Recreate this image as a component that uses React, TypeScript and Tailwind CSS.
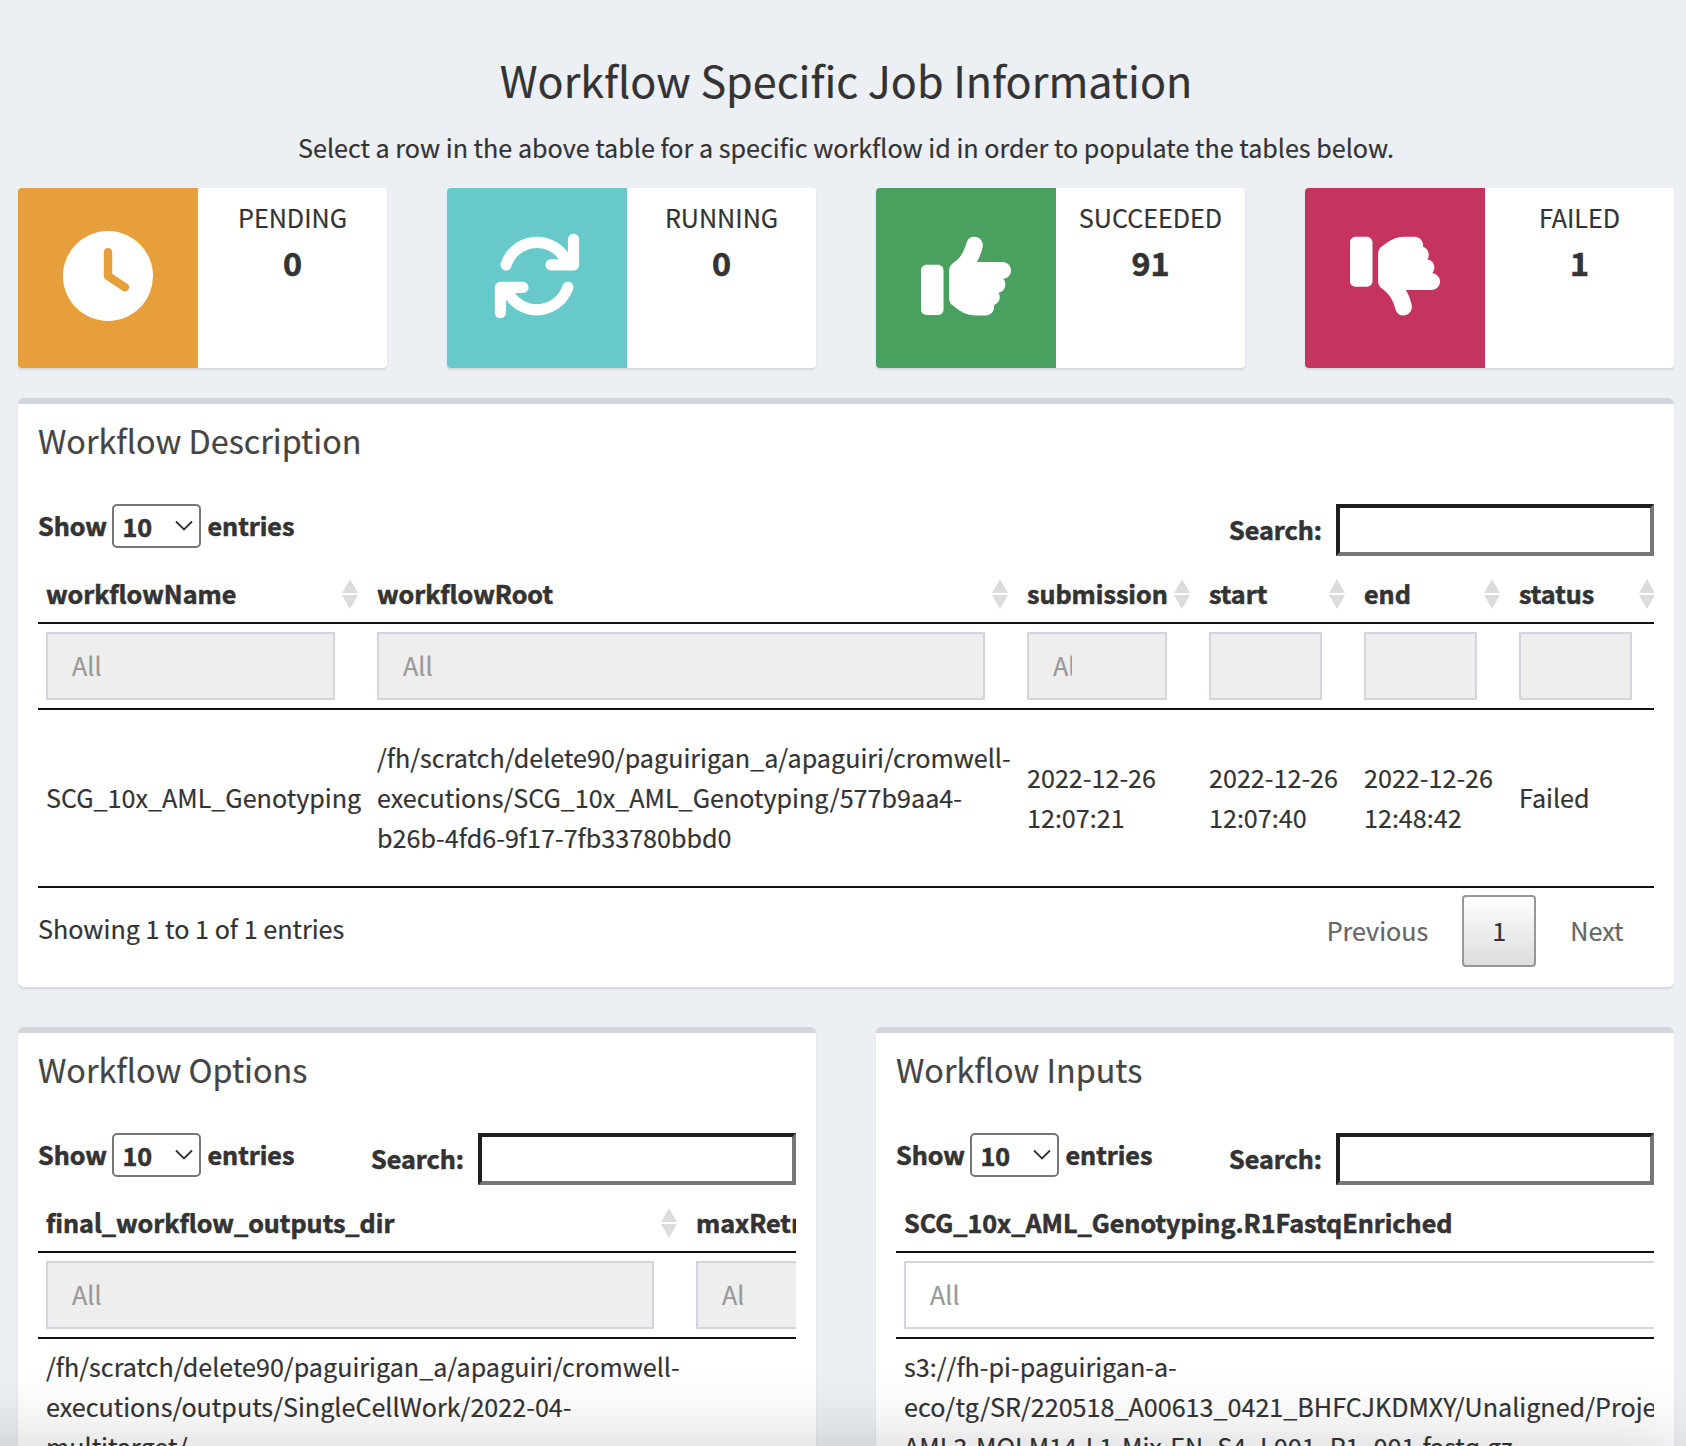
import React from "react";

type Status = { label: string; value: string; color: string; path: string };

const clockPath =
  "M256 0a256 256 0 1 1 0 512A256 256 0 1 1 256 0zM232 120V256c0 8 4 15.5 10.7 20l96 64c11 7.4 25.9 4.4 33.3-6.7s4.4-25.9-6.7-33.3L280 243.2V120c0-13.3-10.7-24-24-24s-24 10.7-24 24z";
const rotatePath =
  "M464 16c-17.67 0-32 14.31-32 32v74.09C392.1 66.52 327.4 32 256 32C161.5 32 78.59 92.64 49.58 182.8c-5.438 16.81 3.797 34.88 20.61 40.28c16.89 5.5 34.88-3.812 40.3-20.59C130.9 138.5 189.4 96 256 96c50.5 0 96.26 24.55 124.4 64H336c-17.67 0-32 14.31-32 32s14.33 32 32 32h128c17.67 0 32-14.31 32-32V48C496 30.31 481.7 16 464 16zM441.8 289.6c-16.92-5.438-34.88 3.812-40.3 20.59C381.1 373.5 322.6 416 256 416c-50.5 0-96.25-24.55-124.4-64H176c17.67 0 32-14.31 32-32s-14.33-32-32-32h-128c-17.67 0-32 14.31-32 32v144c0 17.69 14.33 32 32 32s32-14.31 32-32v-74.09C119.9 445.5 184.6 480 255.1 480c94.45 0 177.4-60.64 206.4-150.8C467.9 313.1 458.6 295 441.8 289.6z";
const thumbsUpPath =
  "M128 447.1V223.1c0-17.67-14.33-31.1-32-31.1H32c-17.67 0-32 14.33-32 31.1v223.1c0 17.67 14.33 31.1 32 31.1h64C113.7 479.1 128 465.6 128 447.1zM512 224.1c0-26.5-21.48-47.98-48-47.98h-146.5c22.77-37.91 34.52-80.88 34.52-96.02C352 56.52 333.5 32 302.5 32c-63.13 0-26.36 76.15-108.2 141.6L178 186.6C166.2 196.1 160.2 210 160.1 224L160 384c0 15.1 7.113 29.33 19.2 38.39l34.14 25.59C241 468.8 274.7 480 309.3 480H368c26.52 0 48-21.47 48-47.98c0-3.635-.4805-7.143-1.246-10.55C434 415.2 448 397.4 448 376c0-9.148-2.697-17.61-7.139-24.88C463.1 347 480 327.5 480 304.1c0-12.5-4.893-23.78-12.72-32.32C492.2 270.1 512 249.5 512 224.1z";
const thumbsDownPath =
  "M96 32.04H32c-17.67 0-32 14.32-32 31.1v223.1c0 17.67 14.33 31.1 32 31.1h64c17.67 0 32-14.33 32-31.1V64.03C128 46.36 113.7 32.04 96 32.04zM467.3 240.2C475.1 231.7 480 220.4 480 207.9c0-23.47-16.87-42.92-39.14-47.09C445.3 153.6 448 145.1 448 135.1c0-21.32-14-39.18-33.25-45.43C415.5 87.12 416 83.61 416 79.98C416 53.47 394.5 32 368 32h-58.69c-34.61 0-68.28 11.22-95.97 31.98L179.2 89.57C167.1 98.63 160 112.9 160 127.1l.1074 160c.0703 13.99 6.123 27.94 17.91 37.36l16.3 13.03C276.2 403.9 239.4 480 302.5 480c30.96 0 49.47-24.52 49.47-48.11c0-15.15-11.76-58.12-34.52-96.02H464c26.52 0 48-21.47 48-47.98C512 262.5 492.2 241.9 467.3 240.2z";

const statuses: Status[] = [
  { label: "PENDING", value: "0", color: "bg-[#e69f3a]", path: clockPath },
  { label: "RUNNING", value: "0", color: "bg-[#67c9ca]", path: rotatePath },
  { label: "SUCCEEDED", value: "91", color: "bg-[#4aa15f]", path: thumbsUpPath },
  { label: "FAILED", value: "1", color: "bg-[#c5345f]", path: thumbsDownPath },
];

function StatusBox({ label, value, color, path }: Status) {
  return (
    <div className="flex h-[180px] overflow-hidden rounded-[4px] bg-white shadow-[0_2px_2px_rgba(0,0,0,0.1)]">
      <div className={`flex w-[180px] shrink-0 items-center justify-center pb-1 text-white ${color}`}>
        <svg width="90" height="90" viewBox="0 0 512 512" fill="currentColor">
          <path d={path} />
        </svg>
      </div>
      <div className="flex flex-1 flex-col items-center pt-[9px]">
        <div className="h-10 leading-10">{label}</div>
        <div className="h-[50px] text-[32.3px] leading-[50px] font-bold [-webkit-text-stroke:0.6px]">{value}</div>
      </div>
    </div>
  );
}

function Panel({ title, className = "", children }: { title: string; className?: string; children: React.ReactNode }) {
  return (
    <section className={`rounded-[6px] border-t-[6px] border-[#d2d6dc] bg-white px-5 shadow-[0_2px_2px_rgba(0,0,0,0.1)] ${className}`}>
      <h3 className="pt-[16px] text-[32.3px] leading-[40px] text-[#444]">{title}</h3>
      {children}
    </section>
  );
}

function Controls() {
  return (
    <div className="mt-[44px] flex h-[52px] items-start justify-between font-bold [-webkit-text-stroke:0.6px]">
      <label className="flex h-11 items-center">
        <span className="pb-[2px]">Show</span>
        <span className="relative mr-[6.5px] ml-[5.5px] block">
          <select className="block h-11 w-[88.5px] appearance-none rounded-[5px] border-2 border-[#767676] bg-white pb-[4px] pl-[8px] font-bold outline-none">
            <option>10</option>
          </select>
          <svg className="pointer-events-none absolute top-[16px] right-[7.5px]" width="18" height="12" viewBox="0 0 18 12" fill="none" stroke="#333" strokeWidth="1.8">
            <path d="M1 1.5 9 9.5 17 1.5" />
          </svg>
        </span>
        <span className="pb-[2px]">entries</span>
      </label>
      <label className="flex items-center">
        <span className="mr-[14px] pb-[2px]">Search:</span>
        <input className="h-[52px] w-[318px] border-4 border-t-[#1f1f1f] border-r-[#767676] border-b-[#767676] border-l-[#1f1f1f] bg-white outline-none" />
      </label>
    </div>
  );
}

function SortIcon() {
  return (
    <svg className="mt-[2px] mr-[10px] shrink-0" width="18" height="32" viewBox="0 0 18 32" fill="#dcdcdc">
      <path d="M9 1 17 15H1ZM9 31 17 17H1Z" />
    </svg>
  );
}

type Column = { name: string; sortable?: boolean; filter: string; placeholder: string };

function TableHead({ columns, grid }: { columns: Column[]; grid: string }) {
  return (
    <>
      <div className={`grid h-[68px] border-b-2 border-[#111] ${grid}`}>
        {columns.map((c) => (
          <div key={c.name} className="flex items-center justify-between pt-[8px] pl-2 font-bold whitespace-nowrap [-webkit-text-stroke:0.6px]">
            <span>{c.name}</span>
            {c.sortable !== false && <SortIcon />}
          </div>
        ))}
      </div>
      <div className={`grid h-[86px] border-b-2 border-[#111] ${grid}`}>
        {columns.map((c) => (
          <div key={c.name} className="pt-2 pl-2">
            <input
              placeholder={c.placeholder}
              className={`block h-[68px] border-2 border-[#d2d6dc] pb-[2px] pl-6 outline-none placeholder:text-[#999] placeholder:opacity-100 ${c.filter}`}
            />
          </div>
        ))}
      </div>
    </>
  );
}

const descriptionGrid = "w-[1628px] grid-cols-[331px_650px_182px_155px_155px_155px]";
const descriptionColumns: Column[] = [
  { name: "workflowName", filter: "w-[289px] bg-[#eee]", placeholder: "All" },
  { name: "workflowRoot", filter: "w-[608px] bg-[#eee]", placeholder: "All" },
  { name: "submission", filter: "w-[140px] bg-[#eee] pr-[93px]", placeholder: "All" },
  { name: "start", filter: "w-[113px] bg-[#eee]", placeholder: "" },
  { name: "end", filter: "w-[113px] bg-[#eee]", placeholder: "" },
  { name: "status", filter: "w-[113px] bg-[#eee]", placeholder: "" },
];

const optionsGrid = "w-[850px] grid-cols-[650px_200px]";
const optionsColumns: Column[] = [
  { name: "final_workflow_outputs_dir", filter: "w-[608px] bg-[#eee]", placeholder: "All" },
  { name: "maxRetries", filter: "w-[140px] bg-[#eee] pr-[91.5px]", placeholder: "All" },
];

const inputsGrid = "w-[1000px] grid-cols-[1000px]";
const inputsColumns: Column[] = [
  { name: "SCG_10x_AML_Genotyping.R1FastqEnriched", sortable: false, filter: "w-[940px] bg-white", placeholder: "All" },
];

export default function App() {
  return (
    <div className="relative h-[1446px] w-[1686px] overflow-hidden bg-[#ecf0f5] pr-3 pl-[18px] font-['Noto_Sans_CJK_SC',sans-serif] text-[25.14px] leading-10 text-[#333] [-webkit-text-stroke:0.2px]">
      <header className="text-center">
        <h1 className="pt-[49px] text-[43.05px] leading-[60px]">Workflow Specific Job Information</h1>
        <p className="mt-[18px]">Select a row in the above table for a specific workflow id in order to populate the tables below.</p>
      </header>

      <div className="mt-[21px] grid grid-cols-4 gap-[60px]">
        {statuses.map((s) => (
          <StatusBox key={s.label} {...s} />
        ))}
      </div>

      <Panel title="Workflow Description" className="mt-[30px] h-[589px]">
        <Controls />
        <div className="overflow-hidden">
          <TableHead columns={descriptionColumns} grid={descriptionGrid} />
          <div className={`grid h-[178px] items-center border-b-2 border-[#111] pb-[2px] whitespace-nowrap ${descriptionGrid}`}>
            <div className="pl-2">SCG_10x_AML_Genotyping</div>
            <div className="pl-2">
              /fh/scratch/delete90/paguirigan_a/apaguiri/cromwell-
              <br />
              executions/SCG_10x_AML_Genotyping/577b9aa4-
              <br />
              b26b-4fd6-9f17-7fb33780bbd0
            </div>
            <div className="pl-2">2022-12-26<br />12:07:21</div>
            <div className="pl-2">2022-12-26<br />12:07:40</div>
            <div className="pl-2">2022-12-26<br />12:48:42</div>
            <div className="pl-2">Failed</div>
          </div>
        </div>
        <div className="flex items-start justify-between">
          <div className="pt-5">Showing 1 to 1 of 1 entries</div>
          <div className="mt-[7px] flex h-[72px] items-center text-[#666]">
            <span className="pr-[34px] pb-[2px]">Previous</span>
            <span className="flex h-[72px] w-[74px] items-center justify-center rounded-[4px] border-2 border-[#979797] bg-linear-to-b from-white to-[#dcdcdc] pb-[2px] text-[#333]">1</span>
            <span className="pr-[30.5px] pb-[2px] pl-[34px]">Next</span>
          </div>
        </div>
      </Panel>

      <div className="mt-10 grid grid-cols-2 gap-[60px]">
        <Panel title="Workflow Options" className="h-[500px]">
          <Controls />
          <div className="overflow-hidden">
            <TableHead columns={optionsColumns} grid={optionsGrid} />
            <div className="pt-[7px] pl-2 whitespace-nowrap">
              /fh/scratch/delete90/paguirigan_a/apaguiri/cromwell-
              <br />
              executions/outputs/SingleCellWork/2022-04-
              <br />
              multitarget/
            </div>
          </div>
        </Panel>
        <Panel title="Workflow Inputs" className="h-[500px]">
          <Controls />
          <div className="overflow-hidden">
            <TableHead columns={inputsColumns} grid={inputsGrid} />
            <div className="pt-[7px] pl-2 whitespace-nowrap">
              s3://fh-pi-paguirigan-a-
              <br />
              eco/tg/SR/220518_A00613_0421_BHFCJKDMXY/Unaligned/Project
              <br />
              AML3-MOLM14-L1-Mix-EN_S4_L001_R1_001.fastq.gz
            </div>
          </div>
        </Panel>
      </div>

      <div className="pointer-events-none absolute right-0 -bottom-[200px] -left-[100px] h-[200px] shadow-[0_0_80px_rgba(0,0,0,0.19)]" />
    </div>
  );
}
